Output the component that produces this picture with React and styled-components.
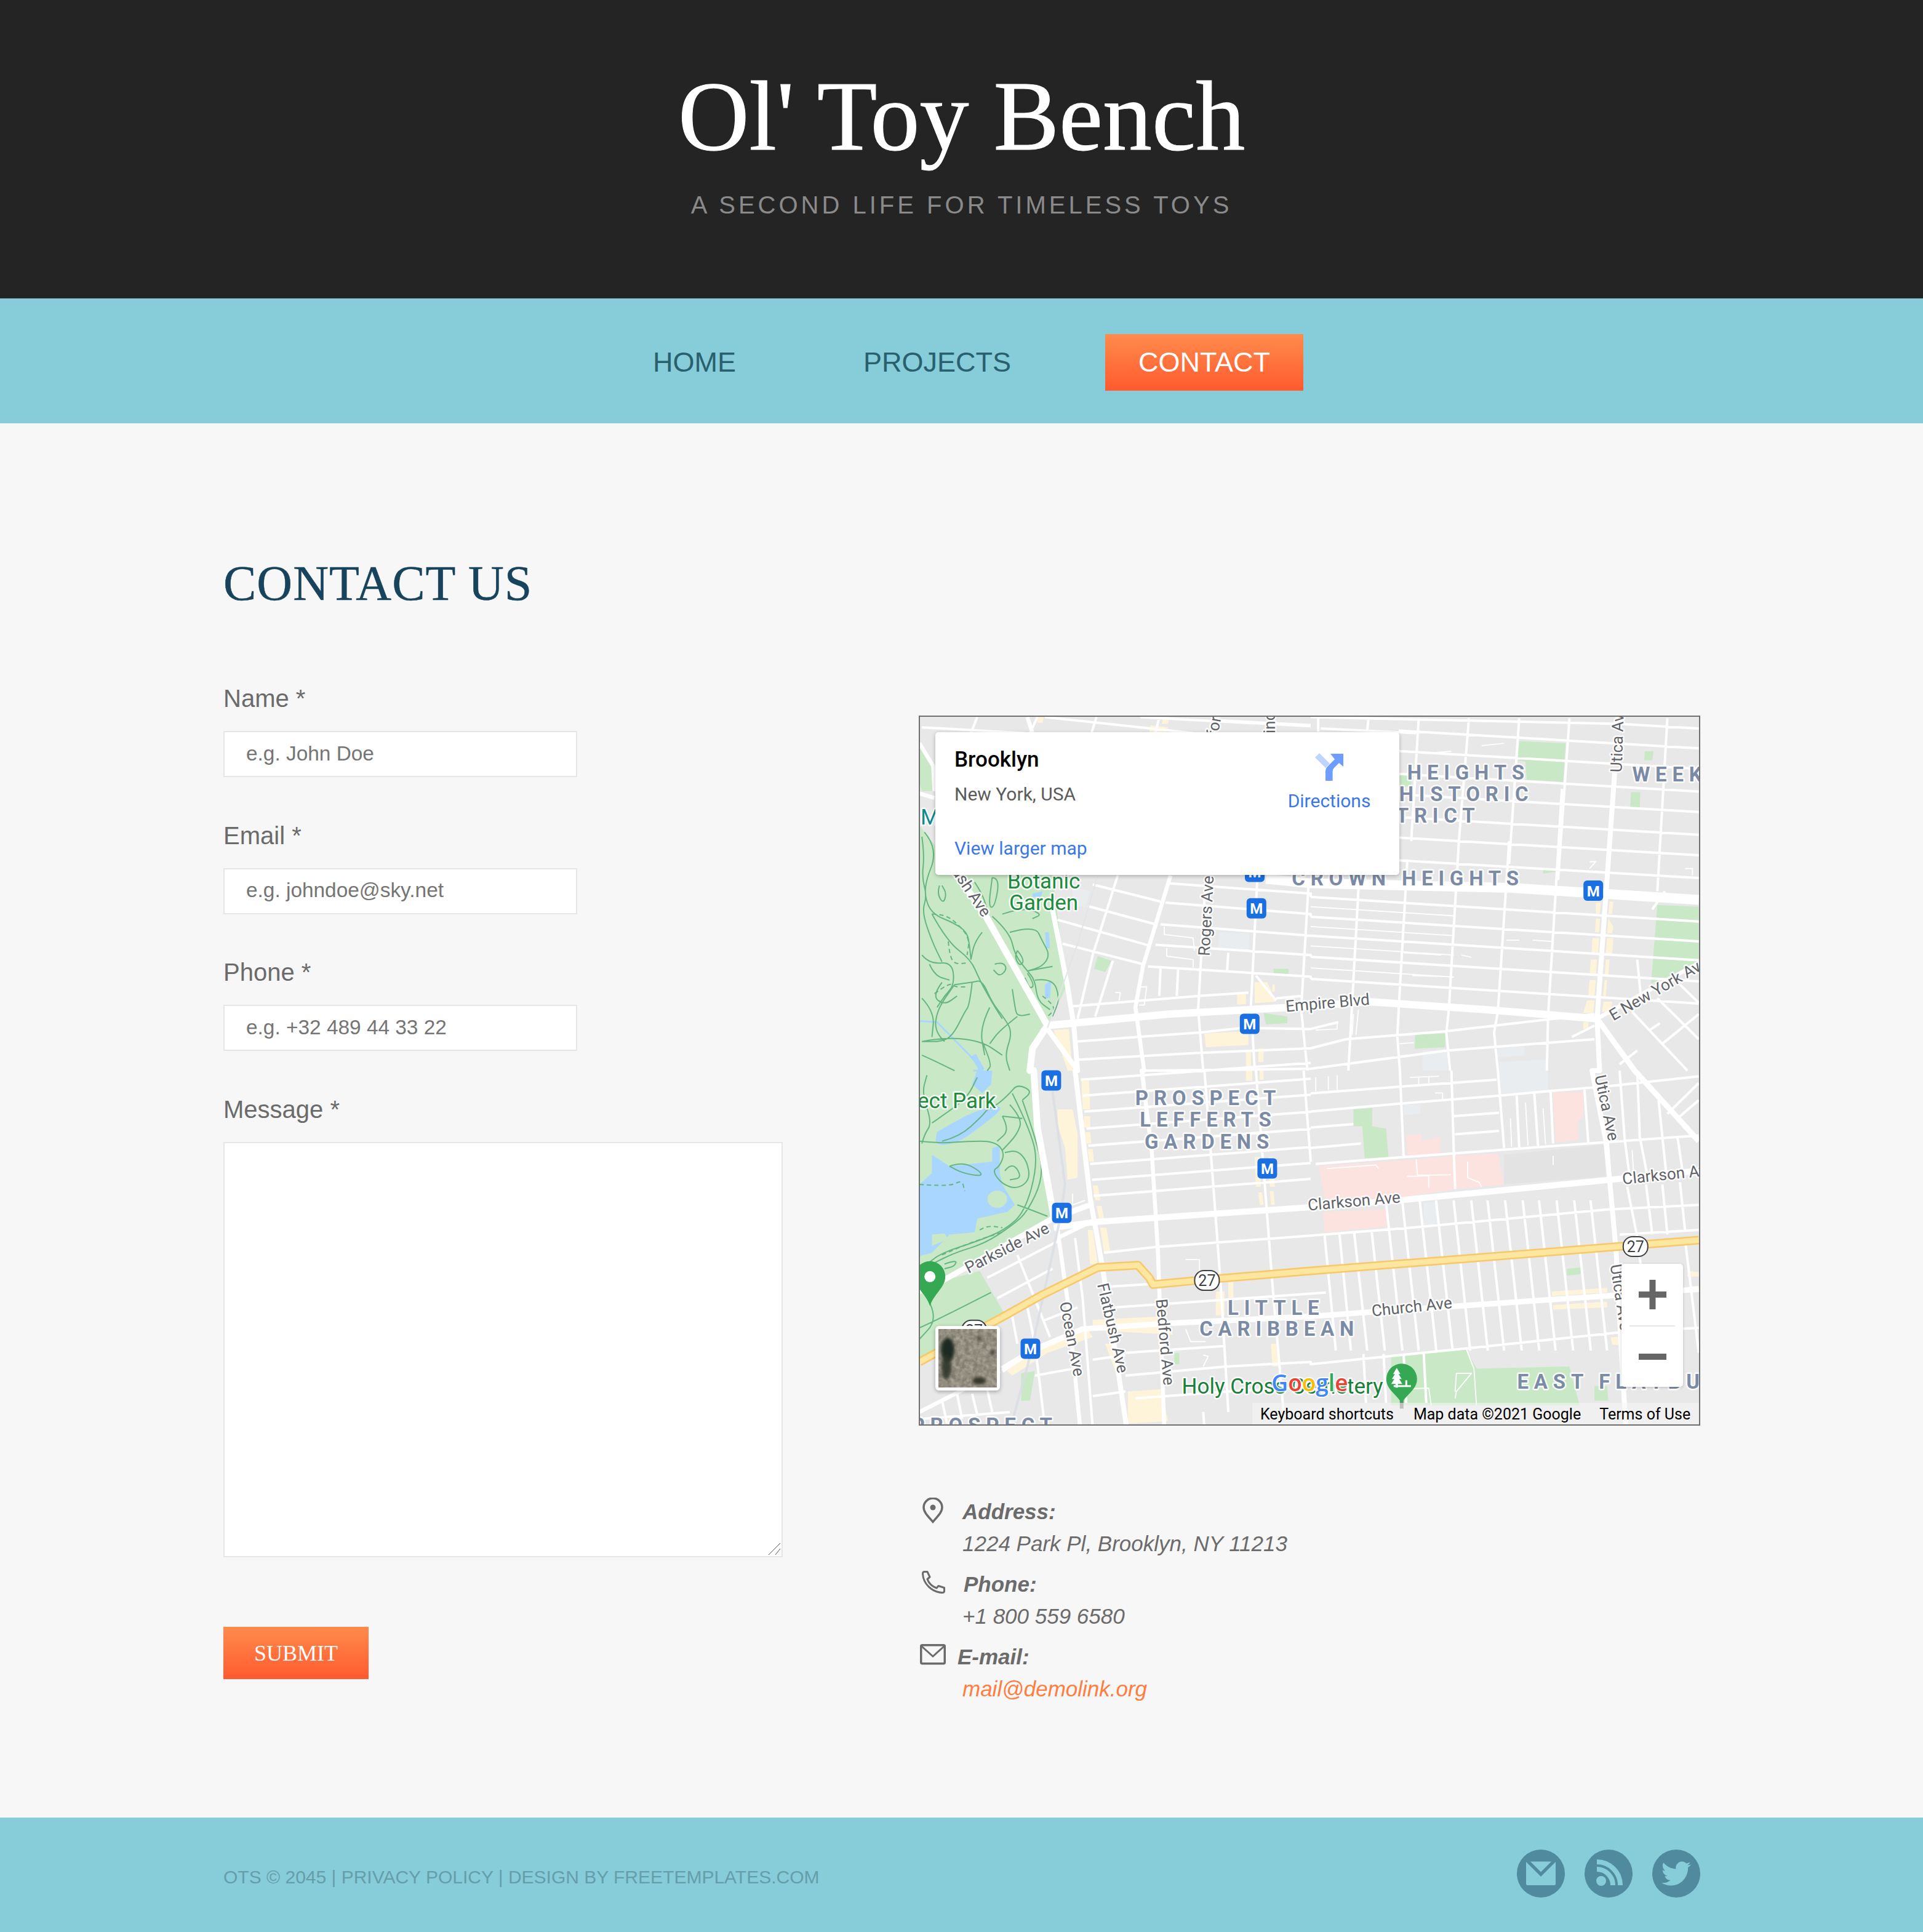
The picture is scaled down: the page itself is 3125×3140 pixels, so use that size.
import React from "react";
import styled, { createGlobalStyle } from "styled-components";

const GlobalStyle = createGlobalStyle`
  html, body { margin: 0; padding: 0; background: #f7f7f7; }
  body { font-family: "Liberation Sans", Arial, sans-serif; }
  * { box-sizing: border-box; }
`;

const Page = styled.div`
  width: 3125px;
`;

const Header = styled.header`
  height: 485px;
  background: #242424;
  padding-top: 97px;
  text-align: center;
`;
const SiteTitle = styled.h1`
  margin: 0;
  font: 400 160px/184px "Liberation Serif", "Times New Roman", serif;
  -webkit-text-stroke: 1px #fff;
  color: #fff;
`;
const Tagline = styled.p`
  margin: 29px 0 0;
  font: 400 40px/46px "Liberation Sans", Arial, sans-serif;
  letter-spacing: 5px;
  color: #8a8a8a;
`;

const Nav = styled.nav`
  height: 203px;
  background: #87ccd9;
  padding-top: 58px;
  display: flex;
  justify-content: center;
  gap: 99px;
`;
const NavItem = styled.a`
  height: 92px;
  padding: 0 54px;
  font: 400 45px/91px "Liberation Sans", Arial, sans-serif;
  color: ${(p) => (p.$active ? "#fff" : "#28606e")};
  background: ${(p) => (p.$active ? "linear-gradient(#ff8b4b, #ff5a2f)" : "none")};
`;

const Main = styled.main`
  height: 2266px;
  background: #f7f7f7;
  padding: 214px 0 0 363px;
  display: grid;
  grid-template-columns: 1130px 1270px;
`;
const Heading = styled.h2`
  margin: 0 0 117px;
  font: 400 80px/92px "Liberation Serif", "Times New Roman", serif;
  letter-spacing: 1px;
  -webkit-text-stroke: 0.5px #17435c;
  color: #17435c;
`;
const Field = styled.div`
  position: relative;
  margin-bottom: 70.7px;
`;
const FieldLabel = styled.label`
  display: block;
  margin-bottom: 29px;
  font: 400 40px/48px "Liberation Sans", Arial, sans-serif;
  color: #6b6b6b;
`;
const TextInput = styled.input`
  display: block;
  width: 575px;
  height: 75px;
  padding: 0 34px 2px 35px;
  background: #fff;
  border: 2px solid #e6e6e6;
  outline: none;
  font: 400 33.400px "Liberation Sans", Arial, sans-serif;
  &::placeholder { color: #757575; opacity: 1; }
`;
const TextArea = styled.textarea`
  display: block;
  width: 909px;
  height: 675px;
  background: #fff;
  border: 2px solid #e6e6e6;
  outline: none;
  resize: none;
`;
const ResizeGrip = styled.svg`
  position: absolute;
  left: 885px;
  bottom: 3px;
  width: 21px;
  height: 21px;
`;
const Submit = styled.button`
  display: block;
  width: 236px;
  height: 85px;
  margin-top: 113px;
  padding: 0;
  border: 0;
  background: linear-gradient(#ff8b4b, #ff5a2f);
  color: #fff;
  font: 400 36px "Liberation Serif", "Times New Roman", serif;
`;

const RightCol = styled.div`
  padding-top: 261px;
`;
const MapFrame = styled.div`
  position: relative;
  width: 1270px;
  height: 1154px;
  border: 2px solid #6f6f6f;
  overflow: hidden;
  background: #e8e8e8;
`;
const MapSvg = styled.svg`
  display: block;
  width: 1266px;
  height: 1150px;
  font-family: Roboto, "Liberation Sans", sans-serif;
`;
const haloText = `
  paint-order: stroke;
  stroke: rgba(255,255,255,.85);
  stroke-width: 5px;
  stroke-linejoin: round;
`;
const District = styled.text`
  ${haloText}
  font-size: 33px;
  font-weight: 700;
  letter-spacing: 8.800px;
  fill: #7c8ba5;
`;
const Street = styled.text`
  ${haloText}
  font-size: 26px;
  fill: #5f6368;
`;
const ParkName = styled.text`
  ${haloText}
  font-size: 35px;
  fill: ${(p) => p.$fill || "#1e8a3e"};
`;
const Subway = styled.text`
  font-size: 24px;
  font-weight: 700;
  fill: #fff;
  text-anchor: middle;
`;
const ShieldNo = styled.text`
  font-size: 25px;
  fill: #3c4043;
  text-anchor: middle;
`;
const GoogleMark = styled.text`
  ${haloText}
  stroke-width: 4px;
  font-family: "Open Sans", Roboto, sans-serif;
  font-size: 37px;
  font-weight: 600;
`;

const PlaceCard = styled.div`
  position: absolute;
  left: 25px;
  top: 25px;
  width: 754px;
  height: 232px;
  padding: 0 0 0 31px;
  background: #fff;
  border-radius: 5px;
  box-shadow: 0 2px 6px rgba(0,0,0,.25);
  display: flex;
  justify-content: space-between;
  font-family: Roboto, "Liberation Sans", sans-serif;
`;
const PlaceText = styled.div`
  padding-top: 25px;
`;
const PlaceTitle = styled.div`
  font-size: 35px;
  line-height: 40px;
  font-weight: 500;
  color: #000;
`;
const PlaceSub = styled.div`
  margin-top: 18px;
  font-size: 30px;
  line-height: 36px;
  color: #5b5b5b;
`;
const CardLink = styled.a`
  display: block;
  font-size: 30px;
  line-height: 36px;
  color: #3a78e7;
`;
const LargerLink = styled(CardLink)`
  margin-top: 52px;
`;
const DirBox = styled.div`
  width: 180px;
  padding: 34px 48px 0 0;
  display: flex;
  flex-direction: column;
  align-items: center;
  gap: 14px;
`;
const ZoomBox = styled.div`
  position: absolute;
  left: 1140px;
  top: 889px;
  width: 100px;
  height: 200px;
  background: #fff;
  border-radius: 5px;
  box-shadow: 0 1px 4px rgba(0,0,0,.2);
  display: grid;
  grid-template-rows: 100px 100px;
`;
const ZoomBtn = styled.div`
  display: flex;
  align-items: center;
  justify-content: center;
  border-top: ${(p) => (p.$line ? "2px solid #e6e6e6" : "0")};
  margin: 0 13px;
`;
const Thumb = styled.div`
  position: absolute;
  left: 25px;
  top: 990px;
  width: 105px;
  height: 105px;
  border: 5px solid #fff;
  border-radius: 6px;
  box-shadow: 0 2px 6px rgba(0,0,0,.3);
  overflow: hidden;
  background: #8f8a78;
`;
const Attribution = styled.div`
  position: absolute;
  right: 0;
  bottom: 0;
  width: 726px;
  height: 35px;
  background: rgba(245,245,245,.55);
  display: flex;
  align-items: center;
  padding: 2px 0 0 13px;
  font: 400 25px/33px Roboto, sans-serif;
  color: #000;
`;
const AttrItem = styled.span`
  margin-right: ${(p) => p.$mr}px;
`;

const Info = styled.div`
  margin-top: 114px;
  font: italic 400 35px/52px "Liberation Sans", Arial, sans-serif;
  color: #6b6b6b;
`;
const InfoItem = styled.div`
  position: relative;
  padding-left: 71px;
  margin-bottom: 14px;
`;
const InfoIcon = styled.svg`
  position: absolute;
  left: ${(p) => p.$l}px;
  top: ${(p) => p.$t}px;
  fill: none;
  stroke: #6b6b6b;
`;
const InfoLabel = styled.div`
  font-weight: 700;
  margin-left: ${(p) => p.$ml || 0}px;
`;
const MailLink = styled.a`
  color: #ff7d3f;
`;

const Footer = styled.footer`
  height: 186px;
  background: #87ccd9;
  padding: 52px 362px 0 363px;
  display: flex;
  justify-content: space-between;
`;
const FooterText = styled.div`
  margin-top: 28px;
  font: 400 30px/34px "Liberation Sans", Arial, sans-serif;
  color: #659ea9;
`;
const Social = styled.div`
  display: flex;
  gap: 32px;
`;
const SocialIcon = styled.svg`
  display: block;
  width: 78px;
  height: 78px;
`;

/* ---------- map data, written in crop coordinates of four quadrants ---------- */
const ORIGIN = { a: [1490, 1160], b: [2130, 1160], c: [1490, 1740], d: [2130, 1740] };
const pts = (s) => {
  let q = "a";
  return s.trim().split(/\s+/).map((t) => {
    if (/^[abcd]/.test(t)) { q = t[0]; t = t.slice(1); }
    const [x, y] = t.split(",").map(Number);
    return [+(ORIGIN[q][0] + x / 2.45).toFixed(1), +(ORIGIN[q][1] + y / 2.703).toFixed(1)];
  });
};
const P = (s) => pts(s)[0];
const line = (s) => "M" + pts(s).map((p) => p.join(" ")).join("L");
const poly = (s) => line(s) + "Z";
const curve = (s) => {
  const p = pts(s);
  let d = `M${p[0].join(" ")}`;
  for (let i = 1; i < p.length - 1; i++) {
    const mx = (p[i][0] + p[i + 1][0]) / 2;
    const my = (p[i][1] + p[i + 1][1]) / 2;
    d += `Q${p[i].join(" ")} ${mx} ${my}`;
  }
  d += `L${p[p.length - 1].join(" ")}`;
  return d;
};
const many = (list, fn = line) => list.map(fn).join("");

const GREEN = [
  "a10,140 60,230 62,340 20,340 10,300",
  "a10,490 150,690 540,700 595,1200 530,1350 490,1385 a450,1568 c465,0 530,590 530,650 200,860 100,925 c250,880 350,1070 270,1110 10,1285",
  "b830,120 1015,130 1005,300 860,290 855,210 825,205",
  "b355,270 400,272 400,320 355,320",
  "b1330,165 1365,165 1360,205 1328,205",
  "b1275,345 1312,345 1310,415 1272,415",
  "b1380,840 1545,848 1545,1100 1355,1185",
  "b925,685 975,682 975,695 925,702",
  "b415,1410 535,1405 535,1465 415,1472",
  "a1420,1120 1480,1120 1480,1145 1420,1145",
  "a720,1065 775,1085 750,1135 705,1120",
  "a1380,1315 1475,1330 1475,1360 1390,1365",
  "d320,1260 620,1225 660,1310 1030,1300 1070,1470 320,1470",
  "d170,170 245,165 245,245 300,255 310,380 215,385 205,245 170,245",
  "d1020,870 1075,865 1075,895 1020,900",
  "c1025,1240 1045,1240 1045,1290 1025,1290",
  "c415,1330 470,1320 450,1450 415,1450",
  "d1130,1385 1180,1385 1185,1450 1130,1450",
];
const PINK = [
  "d965,95 1085,95 1085,210 1065,215 1065,305 975,315",
  "d380,285 440,280 440,310 515,290 515,370 385,380",
  "d30,420 420,390 560,375 745,365 770,500 570,522 340,560 60,572",
  "d50,620 300,610 305,685 55,710",
];
const COOLGREY = [
  "a1205,960 1325,965 1320,1040 1200,1035",
  "a620,760 690,780 670,850 620,840",
  "b445,1480 545,1480 545,1568 445,1568",
  "b745,1460 850,1450 850,1500 745,1510",
  "b750,1530 940,1520 940,1568 750,1568",
  "d750,0 945,0 945,95 750,100",
  "d370,150 435,150 435,190 370,195",
  "d450,580 505,575 510,670 450,680",
];
const DARKGREY = "d770,370 1170,325 1175,465 770,500";
const SHOP = [
  "a1145,1405 1320,1395 1320,1455 1150,1465",
  "a1345,1180 1395,1180 1430,1265 1345,1272",
  "a1275,1230 1310,1225 1310,1275 1275,1278",
  "a545,1390 605,1385 620,1568 600,1568",
  "a480,15 505,15 500,40 480,40",
  "a930,50 1000,60 990,85 925,80",
  "a980,15 1005,15 1000,45 975,45",
  "a1310,1480 1330,1480 1330,1560 1310,1560",
  "a1360,1470 1380,1470 1380,1530 1360,1530",
  "a1415,1190 1425,1190 1425,1220 1415,1220",
  "b1135,830 1155,830 1150,880 1135,880",
  "b1190,825 1205,825 1200,880 1185,880",
  "b1135,900 1152,900 1148,960 1132,960",
  "b1185,900 1205,935 1200,965 1180,965",
  "b1122,985 1148,985 1145,1050 1118,1050",
  "b1180,985 1205,985 1200,1055 1175,1055",
  "b1115,1080 1140,1080 1135,1150 1110,1150",
  "b1175,1080 1190,1080 1185,1150 1170,1150",
  "b1110,1170 1135,1170 1130,1240 1105,1240",
  "b1170,1170 1180,1170 1175,1240 1165,1240",
  "b1100,1260 1130,1260 1125,1315 1085,1315",
  "b1165,1265 1200,1265 1195,1310 1160,1310",
  "b1085,1355 1105,1355 1105,1380 1085,1385",
  "c560,170 620,170 640,280 640,470 600,480 590,340 560,240",
  "c655,45 685,45 690,170 660,170",
  "c665,200 690,200 690,250 665,250",
  "c670,270 690,270 695,320 675,320",
  "c680,345 700,345 705,400 685,400",
  "c700,505 720,505 730,570 710,570",
  "c715,595 735,595 745,650 725,650",
  "c680,700 700,700 720,850 690,850",
  "c730,690 755,690 770,800 745,800",
  "c1345,380 1365,380 1370,510 1350,510",
  "c1400,380 1420,380 1425,510 1405,510",
  "c1360,535 1375,535 1380,590 1365,590",
  "c1405,530 1420,530 1425,590 1410,590",
  "c1310,0 1335,0 1335,45 1310,45",
  "c1365,0 1380,0 1380,40 1365,40",
  "c700,1095 980,1080 1020,1160 700,1140",
  "c360,1320 420,1260 670,1120 700,1170 520,1240 380,1340",
  "c840,1410 970,1400 1000,1540 840,1550",
  "c750,1200 790,1200 820,1320 790,1320",
  "c1190,970 1225,970 1225,1075 1190,1075",
  "c1410,1200 1430,1200 1440,1300 1415,1300",
  "c1240,920 1260,920 1260,1000 1240,1000",
  "d960,970 1180,955 1180,975 960,990",
  "d965,1030 1180,1015 1180,1040 965,1050",
  "d1500,880 1545,885 1545,905 1500,905",
  "d1500,950 1545,945 1545,970 1500,970",
  "d1195,1170 1225,1170 1225,1205 1200,1205",
];
const PARK_PATHS = [
  "a20,540 30,620 20,720 40,800 20,870 60,1000 100,1090",
  "a30,520 60,560 70,640 40,720 30,800 60,880 150,920 200,960 210,1020 215,1080",
  "a60,880 120,1000 215,1080 250,1170 300,1270 340,1340",
  "a260,960 230,1000 215,1080",
  "a90,755 80,790 105,835 118,790 100,755",
  "a20,1060 50,1100 140,1090 150,1190 110,1240 80,1290",
  "a50,1100 70,1150 130,1170",
  "a150,1190 220,1180 260,1170 300,1270 350,1340 380,1400 350,1500 370,1568",
  "a220,1180 210,1280 190,1310 150,1400 110,1440 20,1440",
  "a110,1440 70,1400 80,1300 150,1190",
  "a20,1440 120,1420 260,1440 340,1500",
  "a260,1440 300,1540 280,1568",
  "a20,1500 80,1530 150,1568",
  "a380,1210 390,1290 400,1330 450,1320",
  "a400,1330 330,1390 290,1450",
  "a300,890 370,960 390,1060 440,1130 470,1170 480,1260 530,1300",
  "a370,960 470,930 500,1000 530,1060 500,1110 440,1130",
  "a440,1130 490,1120 540,1110",
  "a470,1170 540,1160 570,1250 540,1330",
  "a230,740 260,790 280,860",
  "a300,720 330,720 310,850 285,850 300,720",
  "a340,880 420,850 500,880 460,900",
  "a310,1100 340,1090 360,1120 330,1155 305,1125",
  "a400,1040 430,1080 410,1110 390,1070 400,1040",
  "a440,1140 470,1190 450,1210 430,1160",
  "a100,1180 60,1240 110,1280 160,1240",
  "a20,1250 70,1310 60,1420",
  "a290,1290 250,1380 270,1500",
  "c10,310 90,320 200,310 310,310 350,360 330,420 300,440 340,500 400,520 450,480 440,400 400,350 350,360",
  "c20,320 30,280 60,230 20,100 40,20",
  "c60,230 100,200 200,120 240,30",
  "c100,310 170,290 260,200 280,170 320,150 370,100 400,60 460,90 420,130",
  "c370,150 420,210 400,280 340,350",
  "c340,200 370,260 320,310",
  "c340,200 420,210",
  "c420,130 490,350 500,480 440,620 380,680 270,760 150,800 60,850",
  "c380,100 460,280 480,420 430,620 350,700 240,750 100,800 40,850",
  "c130,420 180,400 250,440 260,465 180,450 130,420",
  "c400,590 450,610 520,640",
  "c350,440 380,400 420,470 370,480",
  "c110,850 160,830 150,860 110,870",
  "c10,1130 80,1095 295,975",
  "c55,1030 80,1095 10,1180",
  "c40,950 55,1030",
];
const PARK_DASH = [
  "a60,880 110,880 170,930 210,990 200,1060",
  "a125,1000 130,1060 150,1100 200,1095",
  "a70,1230 130,1180 150,1200 200,1200",
  "c10,500 130,510 180,480 190,530",
  "c250,700 280,680 340,690",
  "c100,810 200,760 340,710",
  "a500,1240 560,1290 520,1330",
];
const rowsB = [130, 220, 320, 410, 510, 600, 700].map((y) => `b350,${y - 56} 1545,${y + 22}`);
const rowsB2 = [845, 932, 1015, 1108, 1205].map((y) => `b0,${y - 40} 1545,${y + 68}`);
const rowsB3 = [888, 975, 1060, 1157].map((y) => `b0,${y - 40} 570,${y}`);
const rowsC = [30, 100, 170, 245, 320, 400, 470, 540].map((y) => `c${650 + Math.round(y * 0.1)},${y + 10} 1568,${y - 64}`);
const vertD = [180, 250, 320, 385, 455, 520, 590, 660, 725, 795, 865, 930, 1000, 1070, 1135];
const vertCol = vertD.map((x) => {
  const start = x < 310 ? 710 : 570;
  return `d${x - 0.1 * (780 - start)},${start} ${x + 45},1230`;
});
const vertLow = [55, 115].map((x) => `d${x},720 ${x + 45},1230`);
const vertFoot = [210, 290, 370, 450].map((x) => `d${x},1245 ${x + 10},1460`);

const THIN = [
  ...rowsB, ...rowsB2, ...rowsC, ...vertCol, ...vertLow, ...vertFoot,
  "a20,60 430,85", "a240,15 215,85", "a480,15 450,85", "a510,15 1100,85", "a715,15 695,85", "a890,15 1568,55", "a965,15 950,85", "a1215,30 1568,50",
  "b0,15 1230,45 1545,65", "b40,65 420,85",
  "a1000,745 1568,790 b0,805", "a990,830 1568,880 b0,892", "a970,925 1568,975 b0,975", "a950,1015 1568,1060 b0,1068", "a920,1110 1568,1155 b0,1165",
  "a700,750 970,825", "a680,845 950,925", "a560,905 930,1020", "a580,1010 900,1100",
  "a620,1285 1120,1240 1320,1225", "a1430,1250 1530,1240",
  "a640,1440 880,1420 1130,1400 1300,1380 1568,1385 b110,1355", "a640,1520 1120,1490 1568,1470 b140,1430 540,1395 930,1345 1130,1320", "a900,1568 1568,1560 b540,1480 1130,1430",
  "a800,710 700,1060 640,1340", "a780,1085 710,1330", "a1150,720 1130,1100 1120,1300 1140,1568", "a1355,730 1330,1280 1345,1568", "a1560,740 1530,1300 1555,1568",
  "a1240,1050 1235,1130", "a970,1120 965,1240", "a1040,1120 1035,1240", "a1350,1150 1430,1260",
  "b30,15 30,80", "b230,15 225,80", "b430,20 400,560", "b630,20 590,560", "b830,20 790,660", "b1030,20 985,730", "b1420,20 1380,780", "b1410,780 1360,860",
  "b190,770 150,1568", "b385,640 350,1300 345,1420 355,1568", "b590,560 550,1300 540,1400 555,1568", "b790,560 745,1310 730,1400 745,1568", "b1000,330 945,1330 940,1568",
  "b1300,1080 1315,1250", "b1280,1310 1500,1568", "b1380,1250 1545,1430", "b1470,1190 1545,1270", "b1350,1390 1390,1360", "b1400,1450 1545,1320", "b1040,1420 1130,1370", "b1230,1540 1300,1480",
  "c900,0 935,350", "c1145,0 1180,500 1210,950 1240,1500", "c1350,0 1385,500 1420,1000 1460,1500", "c1140,1500 1145,1568", "c1540,0 1568,400",
  "c745,800 950,775 1568,725 d50,720 400,690 1180,610 1545,590",
  "c750,950 1180,920", "c790,1040 1180,1010 1568,980 d60,975", "c830,1340 1230,1300 1568,1280 d0,1290 620,1220 1230,1150 1545,1130", "c830,1240 1220,1210", "c870,1440 1240,1410 1568,1390",
  "d0,100 360,70 740,40", "d0,180 360,145 750,110 950,90 1170,70 1545,25", "d570,200 750,185", "d575,280 750,265", "d0,250 170,235", "d0,340 200,320", "d20,410 370,380 1170,315 1545,285",
  "d355,0 370,380", "d560,0 570,370 575,520", "d745,0 770,340", "d820,110 830,340", "d890,100 905,330", "d955,90 965,320", "d1090,85 1105,315", "d1230,0 1250,300 1270,470", "d1300,0 1310,290 1340,460", "d1385,130 1400,290 1415,450", "d1460,290 1480,440",
  "d1260,510 1300,730 1345,1140", "d1335,500 1360,720", "d1400,500 1420,720", "d1470,490 1490,700", "d1490,740 1545,1240",
  "d1545,55 1420,190", "d1545,130 1460,210", "d1230,720 1545,700",
  "c280,910 560,750", "c320,1000 540,870", "c400,810 530,1170", "c630,735 660,1000 700,1568", "c500,1100 640,1040", "c380,1080 400,1200", "c440,1040 470,1200 510,1568", "c470,1340 620,1310", "c100,1450 120,1550", "c160,1420 180,1530", "c220,1420 240,1510", "c280,1400 300,1500", "c20,1530 370,1500", "c700,1270 830,1250", "c700,1430 830,1410",
];
const FINE = [
  ...rowsB3,
  "a985,935 985,970 1100,985 1105,1040", "a995,1030 995,1065 1100,1080 1100,1115", "a790,1225 810,1225 805,1260", "a885,1200 915,1200 905,1280 885,1280",
  "b500,170 560,165", "b680,140 770,130", "b1110,650 1135,650 1110,680", "b1490,680 1520,680 1520,710",
  "b600,1060 640,1070", "b780,995 830,995", "b885,995 960,1000", "b405,1150 550,1155", "b370,1050 520,1060", "b170,1320 165,1410", "b190,1300 180,1410", "b20,1390 105,1385 105,1355", "b350,1450 410,1445",
  "d20,30 20,90", "d70,25 70,85", "d105,20 105,85", "d395,30 510,25", "d430,30 430,60", "d470,25 470,55", "d495,98 525,98 525,125",
  "d795,210 800,335", "d855,140 865,330", "d925,165 935,325", "d625,400 625,470 670,490 680,510", "d65,430 260,415 270,430", "d420,390 425,460 560,458", "d385,465 470,462 470,515", "d965,375 965,415",
  "d320,1400 470,1395 480,1470", "d575,1440 580,1410 640,1330 580,1330 575,1410", "d620,1225 650,1310 660,1470", "d1280,350 1285,440",
  "c1070,830 1125,830 1125,895", "c1070,1135 1090,1190 1150,1190", "c1140,1250 1160,1255 1140,1300", "c620,540 620,590 670,570",
];
const MED = [
  "a440,15 460,85", "a10,130 65,230 70,340", "a10,350 70,370",
  "a1010,710 900,1110 870,1290 905,1568 c895,0 935,350 960,800 985,1568",
  "c570,730 690,665",
  "c560,700 600,1010 650,1568",
  "b1140,1340 1545,1095",
  "d1180,310 1190,480",
  "c330,1320 10,1500",
  "c340,1320 460,1230",
];
const WIDE = [
  { w: 11, d: "a150,690 275,890 520,1370" },
  { w: 12, d: "a520,1370 1000,1320 1568,1285 b230,1265 700,1300 1140,1340" },
  { w: 11, d: "a520,1370 460,1470 450,1568 c465,0 480,250 545,640" },
  { w: 8, d: "a540,860 600,1200 625,1370 640,1568 c630,0 690,560 740,870 835,1568" },
  { w: 8, d: "a510,1370 640,1568" },
  { w: 8, d: "b1210,260 1140,1340 1150,1568 d1120,0 1175,310 1190,480 1215,780 1240,1300 1255,1568" },
  { w: 16, d: "a1390,725 1568,745 b800,765 1545,818" },
  { w: 10, d: "c545,690 710,665 1568,600 d350,570 1190,480 1545,440" },
  { w: 9, d: "c10,970 100,925 540,650 690,590" },
  { w: 9, d: "c340,1310 460,1230 660,1135 1000,1110 1568,1080 d245,1060 1240,985 1545,960" },
  { w: 9, d: "b1140,1340 1290,1568 d1290,0 1545,310" },
];
const HIGHWAY = "c10,1280 345,1080 490,990 720,865 880,855 925,910 940,940 1130,920 1568,880 d1545,745";

const SUBWAY = ["a1352,855", "a1325,1362", "a1345,695", "b1125,777", "c535,43", "c577,625", "c1395,430", "c452,1222"];
const SHIELDS = ["c1155,922", "d1293,773", "c228,1140"];

const StreetLabel = ({ at, deg, anchor = "start", children }) => {
  const [x, y] = Array.isArray(at) ? at : P(at);
  return (
    <Street x={x} y={y} textAnchor={anchor} transform={`rotate(${deg} ${x} ${y})`}>
      {children}
    </Street>
  );
};
const DistrictLabel = ({ at, anchor = "middle", children }) => {
  const [x, y] = P(at);
  return <District x={x} y={y} textAnchor={anchor}>{children}</District>;
};

const MapArt = () => {
  const [g1x, g1y] = P("c1412,1408");
  const [p1x, p1y] = P("c52,905");
  const [p2x, p2y] = P("d362,1355");
  return (
    <MapSvg viewBox="1495 1165 1266 1150">
      <rect x="1495" y="1165" width="1266" height="1150" fill="#e8e8e8" />
      <path d={poly(DARKGREY)} fill="#e3e3e3" />
      <path d={many(COOLGREY, poly)} fill="#e9edf0" />
      <path d={many(SHOP, poly)} fill="#fdf4da" />
      <path d={many(PINK, poly)} fill="#fde3df" />
      <path d={many(GREEN, poly)} fill="#c9e8c6" />
      <path d={poly("c60,370 130,420 300,400 300,340 330,330 330,450 340,500 390,590 360,620 240,650 230,710 130,720 60,800 10,815 10,500 60,450")} fill="#a8d6fe" />
      <path d={curve("c80,270 200,190 320,150 340,170 250,250 160,320 70,330 80,270")} fill="#a8d6fe" />
      <path d={poly("c240,0 300,0 295,60 260,100 220,60")} fill="#a8d6fe" />
      <path d={poly("c60,720 110,715 125,740 60,770")} fill="#c9e8c6" />
      <ellipse cx={P("c320,565")[0]} cy={P("c320,565")[1]} rx="16" ry="14" fill="#c9e8c6" />
      <path d={line("a10,1350 80,1355 210,1500 260,1568 c225,0")} fill="none" stroke="#a8d6fe" strokeWidth="3" />
      <path d={line("a225,1500 260,1568")} fill="none" stroke="#a8d6fe" strokeWidth="9" />
      <path d={poly("a510,1190 535,1170 530,1250 510,1250")} fill="#a8d6fe" />
      <path d={poly("a510,960 525,960 530,1030 515,1030")} fill="#a8d6fe" />
      <path d={poly("a460,790 500,780 495,805 460,805")} fill="#a8d6fe" />
      <path d={many(PARK_PATHS, curve)} fill="none" stroke="#66b680" strokeWidth="2" />
      <path d={many(PARK_DASH, curve)} fill="none" stroke="#66b680" strokeWidth="2" strokeDasharray="7 5" />
      <g fill="none" stroke="#fff" strokeLinejoin="round" strokeLinecap="butt">
        <path d={many(FINE)} strokeWidth="1.8" />
        <path d={many(THIN)} strokeWidth="4" />
        <path d={many(MED)} strokeWidth="6.5" />
        {WIDE.map((r) => (
          <path key={r.d} d={line(r.d)} strokeWidth={r.w} />
        ))}
      </g>
      <path d={line("c540,90 590,500 570,650 470,1160 440,1300 385,1520")} fill="none" stroke="#d9dee4" strokeWidth="4" opacity=".85" />
      <path d={line("a720,710 640,1010 520,1380")} fill="none" stroke="#e1e5ea" strokeWidth="2" />
      <path d={line(HIGHWAY)} fill="none" stroke="#f8c868" strokeWidth="14" strokeLinejoin="round" />
      <path d={line(HIGHWAY)} fill="none" stroke="#fde7a0" strokeWidth="9" strokeLinejoin="round" />

      <DistrictLabel at="b628,290">HEIGHTS</DistrictLabel>
      <DistrictLabel at="b620,385">HISTORIC</DistrictLabel>
      <DistrictLabel at="b675,478" anchor="end">DISTRICT</DistrictLabel>
      <DistrictLabel at="b850,755" anchor="end">CROWN HEIGHTS</DistrictLabel>
      <DistrictLabel at="b1280,298" anchor="start">WEEKSVILLE</DistrictLabel>
      <DistrictLabel at="c1160,152">PROSPECT</DistrictLabel>
      <DistrictLabel at="c1160,247">LEFFERTS</DistrictLabel>
      <DistrictLabel at="c1165,342">GARDENS</DistrictLabel>
      <DistrictLabel at="c1430,1072">LITTLE</DistrictLabel>
      <DistrictLabel at="c1125,1165" anchor="start">CARIBBEAN</DistrictLabel>
      <DistrictLabel at="d822,1396" anchor="start">EAST FLATBUSH</DistrictLabel>
      <DistrictLabel at="c270,1590">PROSPECT</DistrictLabel>

      <ParkName x={P("a505,768")[0]} y={P("a505,768")[1]} textAnchor="middle">Botanic</ParkName>
      <ParkName x={P("a505,862")[0]} y={P("a505,862")[1]} textAnchor="middle">Garden</ParkName>
      <ParkName x={P("c315,165")[0]} y={P("c315,165")[1]} textAnchor="end">Prospect Park</ParkName>
      <ParkName x={P("c1055,1418")[0]} y={P("c1055,1418")[1]} $fill="#188038">Holy Cross Cemetery</ParkName>
      <ParkName x={1496} y={1340} $fill="#0d8a8a">M</ParkName>

      <StreetLabel at={[1971, 1242]} deg={-80}>Bedford Ave</StreetLabel>
      <StreetLabel at={[2072, 1206]} deg={-90}>Lincoln Rd</StreetLabel>
      <StreetLabel at="a1165,1065" deg={-87}>Rogers Ave</StreetLabel>
      <StreetLabel at="a262,897" deg={56} anchor="end">Wash Ave</StreetLabel>
      <StreetLabel at="c205,892" deg={-27}>Parkside Ave</StreetLabel>
      <StreetLabel at="c568,1020" deg={79}>Ocean Ave</StreetLabel>
      <StreetLabel at="c718,940" deg={77}>Flatbush Ave</StreetLabel>
      <StreetLabel at="c952,1005" deg={85}>Bedford Ave</StreetLabel>
      <StreetLabel at="b1238,258" deg={-88}>Utica Ave</StreetLabel>
      <StreetLabel at="d1130,25" deg={78}>Utica Ave</StreetLabel>
      <StreetLabel at="d1192,855" deg={81}>Utica Ave</StreetLabel>
      <StreetLabel at="a1470,1310" deg={-5}>Empire Blvd</StreetLabel>
      <StreetLabel at="b1205,1350" deg={-30}>E New York Ave</StreetLabel>
      <StreetLabel at="d-10,615" deg={-5}>Clarkson Ave</StreetLabel>
      <StreetLabel at="d1243,500" deg={-6}>Clarkson Ave</StreetLabel>
      <StreetLabel at="d245,1080" deg={-6}>Church Ave</StreetLabel>

      {SUBWAY.map((s) => {
        const [x, y] = P(s);
        return (
          <g key={s}>
            <rect x={x - 16} y={y - 16.5} width="32" height="33" rx="6" fill="#1a6fe3" />
            <Subway x={x} y={y + 9}>M</Subway>
          </g>
        );
      })}
      {SHIELDS.map((s) => {
        const [x, y] = P(s);
        return (
          <g key={s}>
            <rect x={x - 20} y={y - 16} width="40" height="32" rx="15" fill="#fff" stroke="#3c4043" strokeWidth="2" />
            <ShieldNo x={x} y={y + 9}>27</ShieldNo>
          </g>
        );
      })}

      <path d={`M${p1x} ${p1y + 48}C${p1x - 6} ${p1y + 28} ${p1x - 25} ${p1y + 18} ${p1x - 25} ${p1y}a25 25 0 0 1 50 0C${p1x + 25} ${p1y + 18} ${p1x + 6} ${p1y + 28} ${p1x} ${p1y + 48}Z`} fill="#34a853" />
      <circle cx={p1x} cy={p1y} r="9" fill="#fff" />
      <rect x={p2x - 3} y={p2y + 34} width="6" height="14" fill="#5f6368" opacity=".8" />
      <path d={`M${p2x} ${p2y + 40}C${p2x - 6} ${p2y + 26} ${p2x - 25} ${p2y + 18} ${p2x - 25} ${p2y}a25 25 0 0 1 50 0C${p2x + 25} ${p2y + 18} ${p2x + 6} ${p2y + 26} ${p2x} ${p2y + 40}Z`} fill="#34a853" />
      <path d={`M${p2x - 4} ${p2y - 20}l-6 10h3l-5 8h4l-5 8h7v6h4v-6h7l-5-8h4l-5-8h3l-6-10z`} transform={`translate(-4 2)`} fill="#fff" />
      <rect x={p2x - 13} y={p2y + 10} width="28" height="3" fill="#fff" />
      <rect x={p2x + 6} y={p2y + 2} width="3" height="9" fill="#fff" />

      <GoogleMark x={g1x} y={g1y}>
        <tspan fill="#4285f4">G</tspan>
        <tspan fill="#ea4335">o</tspan>
        <tspan fill="#fbbc05">o</tspan>
        <tspan fill="#4285f4">g</tspan>
        <tspan fill="#34a853">l</tspan>
        <tspan fill="#ea4335">e</tspan>
      </GoogleMark>
    </MapSvg>
  );
};

const Aerial = () => (
  <svg width="95" height="95" viewBox="0 0 95 95">
    <defs>
      <filter id="noise" x="0" y="0" width="100%" height="100%">
        <feTurbulence type="fractalNoise" baseFrequency="0.14" numOctaves="3" seed="4" />
        <feColorMatrix values="0 0 0 0 .22  0 0 0 0 .2  0 0 0 0 .16  1.300 1.300 0 0 -.75" />
      </filter>
      <filter id="soft"><feGaussianBlur stdDeviation="2.500" /></filter>
    </defs>
    <rect width="95" height="95" fill="#aaa595" />
    <rect width="95" height="95" filter="url(#noise)" />
    <g filter="url(#soft)">
      <ellipse cx="15" cy="34" rx="11" ry="20" fill="#1f2a22" />
      <ellipse cx="13" cy="62" rx="8" ry="20" fill="#2b3329" opacity=".9" />
      <ellipse cx="66" cy="84" rx="11" ry="6" fill="#34342b" />
      <circle cx="66" cy="16" r="4" fill="#4a4a40" />
      <circle cx="88" cy="38" r="4" fill="#4a3e38" />
    </g>
  </svg>
);

const DirectionsIcon = () => (
  <svg width="46" height="46" viewBox="0 0 46 46">
    <path d="M0 7L7 0L24 17L17 24Z" fill="#c1d3ff" />
    <path d="M17 45V29Q17 25 20 22L32 10L25 1H46V22L39 16L31 24Q28.6 26.5 28.6 30V45Z" fill="#6d9eff" />
  </svg>
);

const Field1 = ({ label, placeholder }) => (
  <Field>
    <FieldLabel>{label}</FieldLabel>
    <TextInput placeholder={placeholder} />
  </Field>
);

export default function App() {
  return (
    <Page>
      <GlobalStyle />
      <Header>
        <SiteTitle>Ol' Toy Bench</SiteTitle>
        <Tagline>A SECOND LIFE FOR TIMELESS TOYS</Tagline>
      </Header>
      <Nav>
        <NavItem>HOME</NavItem>
        <NavItem>PROJECTS</NavItem>
        <NavItem $active>CONTACT</NavItem>
      </Nav>
      <Main>
        <div>
          <Heading>CONTACT US</Heading>
          <Field1 label="Name *" placeholder="e.g. John Doe" />
          <Field1 label="Email *" placeholder="e.g. johndoe@sky.net" />
          <Field1 label="Phone *" placeholder="e.g. +32 489 44 33 22" />
          <Field>
            <FieldLabel>Message *</FieldLabel>
            <TextArea />
            <ResizeGrip viewBox="0 0 21 21">
              <path d="M1 20L20 1M12 20L20 10" stroke="#555" strokeWidth="1" fill="none" />
            </ResizeGrip>
          </Field>
          <Submit>SUBMIT</Submit>
        </div>
        <RightCol>
          <MapFrame>
            <MapArt />
            <PlaceCard>
              <PlaceText>
                <PlaceTitle>Brooklyn</PlaceTitle>
                <PlaceSub>New York, USA</PlaceSub>
                <LargerLink>View larger map</LargerLink>
              </PlaceText>
              <DirBox>
                <DirectionsIcon />
                <CardLink>Directions</CardLink>
              </DirBox>
            </PlaceCard>
            <Thumb><Aerial /></Thumb>
            <ZoomBox>
              <ZoomBtn>
                <svg width="45" height="48" viewBox="0 0 45 48"><path d="M17.5 0h10v19H45v10H27.500v19h-10V29H0V19h17.500z" fill="#666" /></svg>
              </ZoomBtn>
              <ZoomBtn $line>
                <svg width="45" height="10" viewBox="0 0 45 10"><rect width="45" height="10" fill="#666" /></svg>
              </ZoomBtn>
            </ZoomBox>
            <Attribution>
              <AttrItem $mr={32}>Keyboard shortcuts</AttrItem>
              <AttrItem $mr={30}>Map data ©2021 Google</AttrItem>
              <AttrItem $mr={0}>Terms of Use</AttrItem>
            </Attribution>
          </MapFrame>
          <Info>
            <InfoItem>
              <InfoIcon $l={6} $t={3} width="34" height="42" viewBox="0 0 34 42">
                <path d="M17 39.500C10 31 2 24 2 16a15 15 0 0 1 30 0c0 8-8 15-15 23.500z" strokeWidth="3.500" />
                <circle cx="17" cy="16" r="4.500" fill="#6b6b6b" stroke="none" />
              </InfoIcon>
              <InfoLabel>Address:</InfoLabel>
              <div>1224 Park Pl, Brooklyn, NY 11213</div>
            </InfoItem>
            <InfoItem>
              <InfoIcon $l={5} $t={4} width="38" height="37" viewBox="0 0 38 37">
                <path d="M4 1.500H9L13 10L9 13.500C11 20 17 26 24 28L27 24.500L36.500 27.500V33C36.500 35 35 35.500 33 35.500C16 34.500 2.500 21 1.500 5C1.500 3 2 1.500 4 1.500Z" strokeWidth="3" strokeLinejoin="round" />
              </InfoIcon>
              <InfoLabel $ml={2}>Phone:</InfoLabel>
              <div>+1 800 559 6580</div>
            </InfoItem>
            <InfoItem>
              <InfoIcon $l={2} $t={5} width="42" height="34" viewBox="0 0 42 34">
                <rect x="1.750" y="1.750" width="38.500" height="30" rx="2" strokeWidth="3.500" />
                <path d="M2 3L21 20L40 3" strokeWidth="3" />
              </InfoIcon>
              <InfoLabel $ml={-8}>E-mail:</InfoLabel>
              <div><MailLink>mail@demolink.org</MailLink></div>
            </InfoItem>
          </Info>
        </RightCol>
      </Main>
      <Footer>
        <FooterText>OTS © 2045 | PRIVACY POLICY | DESIGN BY FREETEMPLATES.COM</FooterText>
        <Social>
          <SocialIcon viewBox="0 0 78 78">
            <circle cx="39" cy="39" r="39" fill="#4f8a9e" />
            <path d="M15 20L39 44L63 20V56a2 2 0 0 1-2 2H17a2 2 0 0 1-2-2Z" fill="#87ccd9" />
            <path d="M22 19.500H56L39 36.500Z" fill="#87ccd9" />
          </SocialIcon>
          <SocialIcon viewBox="0 0 78 78">
            <circle cx="39" cy="39" r="39" fill="#4f8a9e" />
            <circle cx="27" cy="51" r="8" fill="#87ccd9" />
            <path d="M20 20A38 38 0 0 1 58 58M20 32A26 26 0 0 1 46 58" fill="none" stroke="#87ccd9" strokeWidth="8" />
          </SocialIcon>
          <SocialIcon viewBox="0 0 78 78">
            <circle cx="39" cy="39" r="39" fill="#4f8a9e" />
            <path transform="translate(15 15) scale(2)" d="M23.953 4.57a10 10 0 01-2.825.775 4.958 4.958 0 002.163-2.723c-.951.555-2.005.959-3.127 1.184a4.92 4.92 0 00-8.384 4.482C7.69 8.095 4.067 6.13 1.64 3.162a4.822 4.822 0 00-.666 2.475c0 1.71.87 3.213 2.188 4.096a4.904 4.904 0 01-2.228-.616v.06a4.923 4.923 0 003.946 4.827 4.996 4.996 0 01-2.212.085 4.936 4.936 0 004.604 3.417 9.867 9.867 0 01-6.102 2.105c-.39 0-.779-.023-1.17-.067a13.995 13.995 0 007.557 2.209c9.053 0 13.998-7.496 13.998-13.985 0-.21 0-.42-.015-.63A9.935 9.935 0 0024 4.59z" fill="#87ccd9" />
          </SocialIcon>
        </Social>
      </Footer>
    </Page>
  );
}
